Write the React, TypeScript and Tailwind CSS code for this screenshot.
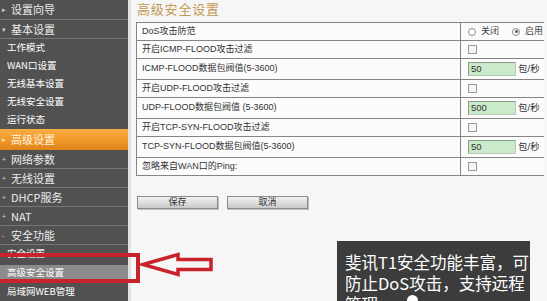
import React from "react";

const FONT = { fontFamily: '"Liberation Sans", "Noto Sans CJK SC", sans-serif' };
const CJK = { fontFamily: '"Noto Sans CJK SC", "Liberation Sans", sans-serif' };

function MainItem({ label, bullet, h = "h-[19px]" }: { label: string; bullet: string; h?: string }) {
  return (
    <div className={`${h} flex items-center border-b border-[#767676] text-[#ececec]`}>
      <span className="w-[11px] pl-[2px] text-[7px] leading-none text-[#d0d0d0]">{bullet}</span>
      <span className="text-[11px] leading-none" style={CJK}>{label}</span>
    </div>
  );
}

function SubItem({ label, h = "h-[18px]", active = false }: { label: string; h?: string; active?: boolean }) {
  return (
    <div className={`${h} flex items-center`}>
      <div className={`flex h-[17px] w-full items-center pl-[7px] ${active ? "bg-[#8b8b8b]" : ""}`}>
        <span className="text-[9.5px] font-normal leading-none text-white" style={CJK}>{label}</span>
      </div>
    </div>
  );
}

function Checkbox() {
  return <div className="h-[9px] w-[9px] border border-[#9a9a9a] bg-[#f4f4f4]" />;
}

function NumInput({ value }: { value: string }) {
  return (
    <div className="flex items-center">
      <div className="flex h-[14px] w-[48px] items-center border border-[#b9c9b9] border-l-[#8a9a8a] border-t-[#8a9a8a] bg-[#c9ebc9] pl-[2px] text-[9.5px] text-[#333]">
        {value}
      </div>
      <span className="ml-[2px] text-[9.5px] text-[#333]">包/秒</span>
    </div>
  );
}

function Row({ label, h, children }: { label: string; h: string; children: React.ReactNode }) {
  return (
    <div className={`${h} flex border-b border-[#858585]`}>
      <div className="flex w-[324px] items-center border-r border-[#858585] pl-[5px] text-[9px] text-[#333]">
        {label}
      </div>
      <div className="flex flex-1 items-center pl-[7px]">{children}</div>
    </div>
  );
}

function Btn({ label }: { label: string }) {
  return (
    <div className="flex h-[13px] w-[81px] items-center justify-center border border-[#8c8c8c] bg-gradient-to-b from-[#f2f2f2] to-[#c9c9c9] text-[9px] text-[#333] shadow-[1px_1px_0_#bdbdbd]">
      {label}
    </div>
  );
}

export default function App() {
  return (
    <div className="relative flex h-[301px] w-[547px] overflow-hidden bg-[#f6f6f6]" style={FONT}>
      {/* Sidebar */}
      <div className="flex w-[128px] shrink-0 flex-col bg-[#515151]">
        <MainItem label="设置向导" bullet="▸" h="h-[20px]" />
        <MainItem label="基本设置" bullet="▾" />
        <SubItem label="工作模式" />
        <SubItem label="WAN口设置" />
        <SubItem label="无线基本设置" />
        <SubItem label="无线安全设置" />
        <SubItem label="运行状态" />
        <div className="flex h-[21px] items-center bg-gradient-to-b from-[#f7ad45] via-[#f19a2a] to-[#df8416] text-white">
          <span className="w-[11px] pl-[2px] text-[7px] leading-none text-[#fde3b8]">▸</span>
          <span className="text-[11px] leading-none text-[#fff3e0]" style={CJK}>高级设置</span>
        </div>
        <MainItem label="网络参数" bullet="+" />
        <MainItem label="无线设置" bullet="+" />
        <MainItem label="DHCP服务" bullet="+" />
        <MainItem label="NAT" bullet="+" />
        <MainItem label="安全功能" bullet="-" />
        <SubItem label="安全设置" />
        <SubItem label="高级安全设置" h="h-[20px]" active />
        <SubItem label="局域网WEB管理" />
      </div>
      <div className="w-[3px] shrink-0 bg-[#e2e2e2]" />

      {/* Content */}
      <div className="flex flex-1 flex-col pl-[5px]">
        <div className="ml-[1px] h-[22px] text-[13px] leading-[17px] tracking-[0.8px] text-[#c39a52]" style={CJK}>
          高级安全设置
        </div>
        <div className="w-[408px] border-l border-t border-[#858585] bg-[#fcfcfc]">
          <Row label="DoS攻击防范" h="h-[18px]">
            <div className="flex items-center text-[9px] text-[#444]">
              <div className="h-[8px] w-[8px] rounded-full border border-[#8a8a8a] bg-white" />
              <span className="ml-[5px]">关闭</span>
              <div className="ml-[13px] flex h-[8px] w-[8px] items-center justify-center rounded-full border border-[#8a8a8a] bg-white">
                <div className="h-[3px] w-[3px] rounded-full bg-[#555]" />
              </div>
              <span className="ml-[5px]">启用</span>
            </div>
          </Row>
          <Row label="开启ICMP-FLOOD攻击过滤" h="h-[18px]"><Checkbox /></Row>
          <Row label="ICMP-FLOOD数据包阀值(5-3600)" h="h-[21px]"><NumInput value="50" /></Row>
          <Row label="开启UDP-FLOOD攻击过滤" h="h-[18px]"><Checkbox /></Row>
          <Row label="UDP-FLOOD数据包阀值  (5-3600)" h="h-[21px]"><NumInput value="500" /></Row>
          <Row label="开启TCP-SYN-FLOOD攻击过滤" h="h-[18px]"><Checkbox /></Row>
          <Row label="TCP-SYN-FLOOD数据包阀值(5-3600)" h="h-[21px]"><NumInput value="50" /></Row>
          <Row label="忽略来自WAN口的Ping:" h="h-[18px]"><Checkbox /></Row>
        </div>
        <div className="ml-[1px] mt-[20px] flex gap-[9px]">
          <Btn label="保存" />
          <Btn label="取消" />
        </div>
      </div>

      {/* Red highlight box */}
      <div className="absolute left-[-4px] top-[253px] h-[30px] w-[144px] border-4 border-[#c8222b]" />

      {/* Red arrow */}
      <svg className="absolute left-[136px] top-[248px]" width="80" height="32" viewBox="136 248 80 32">
        <path
          d="M143 264.5 L178 254.5 L178 259.5 L211 259.5 L211 269.5 L178 269.5 L178 274.5 Z"
          fill="none"
          stroke="#c8222b"
          strokeWidth="3.5"
          strokeLinejoin="miter"
        />
      </svg>

      {/* Caption overlay */}
      <div className="absolute left-[337px] top-[241px] h-[70px] w-[193px] bg-[#3c3c3c] pl-[8px] pt-[11px] text-[16.5px] leading-[21px] text-white" style={CJK}>
        <div>斐讯T1安全功能丰富，可</div>
        <div>防止DoS攻击，支持远程</div>
        <div>管理</div>
        <div className="absolute left-[70px] top-[54px] h-[11px] w-[11px] rounded-full bg-white" />
      </div>
    </div>
  );
}
